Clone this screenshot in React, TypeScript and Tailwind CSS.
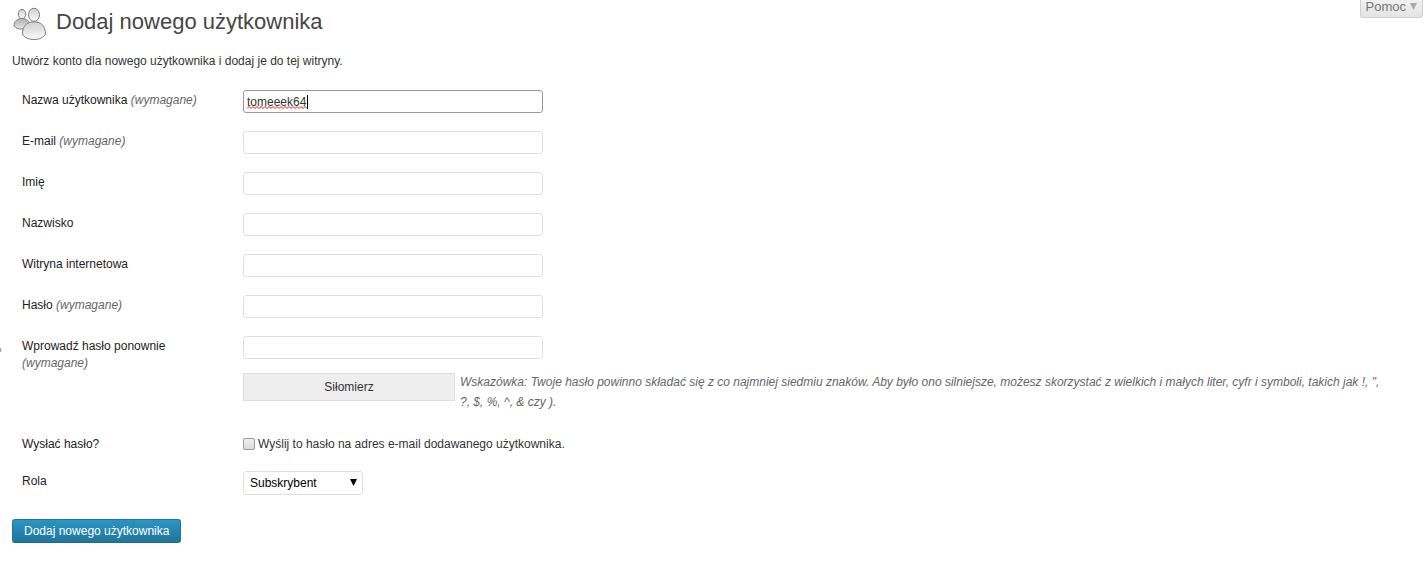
import { useState } from "react";
import type { ReactNode } from "react";

const INPUT =
  "block h-[23px] w-[300px] rounded-[3px] border border-[#dfdfdf] bg-white px-[3px] text-xs text-[#333] outline-none";

const FIELDS = [
  { id: "email", label: "E-mail", type: "email", required: true },
  { id: "first_name", label: "Imię", type: "text", required: false },
  { id: "last_name", label: "Nazwisko", type: "text", required: false },
  { id: "url", label: "Witryna internetowa", type: "text", required: false },
  { id: "pass1", label: "Hasło", type: "password", required: true },
];

function UsersIcon() {
  return (
    <svg width="34" height="36" viewBox="0 0 34 36" fill="none" aria-hidden="true">
      <defs>
        <linearGradient id="light" x1="0" y1="0" x2="0" y2="1">
          <stop offset="0" stopColor="#cfcfcf" />
          <stop offset="1" stopColor="#fafafa" />
        </linearGradient>
        <linearGradient id="dark" x1="0" y1="0" x2="0" y2="1">
          <stop offset="0" stopColor="#b0b0b0" />
          <stop offset="1" stopColor="#e6e6e6" />
        </linearGradient>
      </defs>
      <g stroke="#7d7d7d">
        <path d="M2 20C2 15 5.500 12.500 10 12.500s8 2.500 8 7.500c-1.500 2.200-4.500 3-8 3S3.500 22.200 2 20Z" fill="url(#dark)" />
        <ellipse cx="10" cy="8" rx="3.800" ry="4.600" fill="url(#light)" />
        <path d="M10.500 28C10.500 20 15 15.800 22 15.800s11.500 4.200 11.500 12.200c-2 4-6.500 5.500-11.500 5.500s-9.500-1.500-11.500-5.500Z" fill="url(#light)" />
        <ellipse cx="22" cy="8.800" rx="5.500" ry="6.600" fill="url(#light)" />
      </g>
    </svg>
  );
}

function Row({ id, label, required, children }: { id: string; label: string; required?: boolean; children: ReactNode }) {
  return (
    <div className="flex items-start">
      <label htmlFor={id} className="w-[221px] shrink-0 pt-0.5 pr-10 leading-[17px] text-[#222]">
        {label} {required && <em className="text-[#666]">(wymagane)</em>}
      </label>
      <div className="min-w-0 flex-1">{children}</div>
    </div>
  );
}

export default function App() {
  const [login, setLogin] = useState("tomeeek64");

  return (
    <div className="relative bg-white px-3 pt-1.5 pb-7 font-['Liberation_Sans',Arial,sans-serif] text-xs text-[#333]">
      <button
        type="button"
        className="absolute top-0 right-1 flex h-[18px] items-center gap-1 rounded-b-[3px] border border-t-0 border-[#d0d0d0] bg-linear-to-b from-[#f1f1f1] to-[#e4e4e4] px-[5px] pb-1 text-[13px] text-[#777]"
      >
        Pomoc
        <svg width="7" height="7" viewBox="0 0 7 7" fill="#aaa" aria-hidden="true">
          <path d="M0 0h7L3.500 7Z" />
        </svg>
      </button>

      {/* Collapsed menu handle peeking in at the left edge */}
      <svg className="absolute top-[347px] left-0" width="2" height="6" viewBox="0 0 2 6" fill="none" aria-hidden="true">
        <circle cx="-1" cy="3" r="2" stroke="#888" />
      </svg>

      <header className="flex h-9 items-start gap-[10px]">
        <UsersIcon />
        <h1 className="text-[22px] leading-8 text-[#464646]">Dodaj nowego użytkownika</h1>
      </header>
      <p className="mt-[10px] leading-[18px]">Utwórz konto dla nowego użytkownika i dodaj je do tej witryny.</p>

      <form className="mt-5" onSubmit={(e) => e.preventDefault()}>
        <div className="flex flex-col gap-[18px] pl-[10px]">
          <Row id="user_login" label="Nazwa użytkownika" required>
            <div className="relative w-[300px]">
              <input
                id="user_login"
                type="text"
                spellCheck={false}
                value={login}
                onChange={(e) => setLogin(e.target.value)}
                className="block h-[23px] w-[300px] rounded-[3px] border border-[#999] bg-white px-[3px] text-xs text-[#333] outline-none"
              />
              {/* Spelling mark and caret */}
              {login === "tomeeek64" && (
                <div className="pointer-events-none absolute inset-y-1 left-1 flex items-end">
                  <svg width="60" height="3" viewBox="0 0 60 3" fill="none" aria-hidden="true">
                    <path
                      d="M0 2.500l2-2 2 2 2-2 2 2 2-2 2 2 2-2 2 2 2-2 2 2 2-2 2 2 2-2 2 2 2-2 2 2 2-2 2 2 2-2 2 2 2-2 2 2 2-2 2 2 2-2 2 2 2-2 2 2 2-2 2 2"
                      stroke="#d81e1e"
                    />
                  </svg>
                  <span className="h-[14px] w-px bg-black" />
                </div>
              )}
            </div>
          </Row>

          {FIELDS.map((field) => (
            <Row key={field.id} id={field.id} label={field.label} required={field.required}>
              <input id={field.id} type={field.type} className={INPUT} />
            </Row>
          ))}

          <Row id="pass2" label="Wprowadź hasło ponownie" required>
            <input id="pass2" type="password" className={INPUT} />
            <div className="mt-[13px] flex items-start gap-[5px] pb-1">
              <div className="mt-px flex h-7 w-[212px] shrink-0 items-center justify-center border border-[#ddd] bg-[#eee]">
                Siłomierz
              </div>
              <p className="leading-5 text-[#666] italic">
                Wskazówka: Twoje hasło powinno składać się z co najmniej siedmiu znaków. Aby było ono silniejsze, możesz
                skorzystać z wielkich i małych liter, cyfr i symboli, takich jak !, ",{" "}
                <span className="whitespace-nowrap">?, $, %, ^, &amp; czy ).</span>
              </p>
            </div>
          </Row>

          <Row id="send_password" label="Wysłać hasło?">
            <label className="flex h-[19px] items-center gap-[3px]">
              <input
                id="send_password"
                type="checkbox"
                className="size-3 appearance-none rounded-[2px] border border-[#9a9a9a] bg-linear-to-b from-[#eee] to-[#ddd] checked:bg-[#2a95c5]"
              />
              Wyślij to hasło na adres e-mail dodawanego użytkownika.
            </label>
          </Row>

          <Row id="role" label="Rola">
            <div className="relative w-[120px]">
              <select
                id="role"
                defaultValue="subscriber"
                className="block h-6 w-full appearance-none rounded-[3px] border border-[#dfdfdf] bg-white px-1.5 text-xs text-black"
              >
                <option value="subscriber">Subskrybent</option>
                <option value="contributor">Współpracownik</option>
                <option value="author">Autor</option>
                <option value="editor">Redaktor</option>
                <option value="administrator">Administrator</option>
              </select>
              <svg
                className="pointer-events-none absolute top-2 right-1.5"
                width="7"
                height="7"
                viewBox="0 0 7 7"
                aria-hidden="true"
              >
                <path d="M0 0h7L3.500 7Z" />
              </svg>
            </div>
          </Row>
        </div>

        <button
          type="submit"
          className="mt-6 h-6 rounded-[3px] border border-[#21759b] border-b-[#1e6a8d] bg-linear-to-b from-[#2a95c5] to-[#21759b] px-[11px] text-xs text-white"
        >
          Dodaj nowego użytkownika
        </button>
      </form>
    </div>
  );
}
